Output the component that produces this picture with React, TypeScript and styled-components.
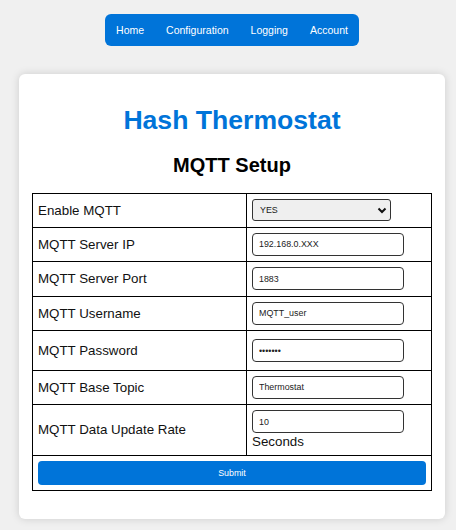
import React, { useState } from 'react'
import styled, { createGlobalStyle } from 'styled-components'

const GlobalStyle = createGlobalStyle`
  body {
    margin: 0;
    background: #f0f0f0;
    font-family: "Liberation Sans", Arial, sans-serif;
    color: #111;
  }
`

const BLUE = '#0074d9'

interface Field {
  label: string
  type: 'select' | 'text' | 'password' | 'number'
  value: string
  unit?: string
  tall?: boolean
}

const fields: Field[] = [
  { label: 'Enable MQTT', type: 'select', value: 'YES' },
  { label: 'MQTT Server IP', type: 'text', value: '192.168.0.XXX' },
  { label: 'MQTT Server Port', type: 'text', value: '1883' },
  { label: 'MQTT Username', type: 'text', value: 'MQTT_user' },
  { label: 'MQTT Password', type: 'password', value: 'passwrd', tall: true },
  { label: 'MQTT Base Topic', type: 'text', value: 'Thermostat' },
  { label: 'MQTT Data Update Rate', type: 'text', value: '10', unit: 'Seconds' },
]

const App = () => {
  const [values, setValues] = useState(fields.map((f) => f.value))

  const update = (i: number, v: string) => {
    const next = [...values]
    next[i] = v
    setValues(next)
  }

  return (
    <Page>
      <GlobalStyle />
      <Nav>
        <NavLink href="#">Home</NavLink>
        <NavLink href="#">Configuration</NavLink>
        <NavLink href="#">Logging</NavLink>
        <NavLink href="#">Account</NavLink>
      </Nav>
      <Card>
        <Title>Hash Thermostat</Title>
        <Subtitle>MQTT Setup</Subtitle>
        <form onSubmit={(e) => e.preventDefault()}>
          <Table>
            <colgroup>
              <col style={{ width: 214 }} />
              <col />
            </colgroup>
            <tbody>
              {fields.map((f, i) => (
                <tr key={f.label}>
                  <Cell tall={f.tall}>{f.label}</Cell>
                  <Cell tall={f.tall}>
                    {f.type === 'select' ? (
                      <SelectWrap>
                        <Select value={values[i]} onChange={(e) => update(i, e.target.value)}>
                          <option>YES</option>
                          <option>NO</option>
                        </Select>
                        <Chevron width="10" height="7" viewBox="0 0 10 7">
                          <path d="M1.5 1.5 L5 5 L8.5 1.5" fill="none" stroke="#111" strokeWidth="2" />
                        </Chevron>
                      </SelectWrap>
                    ) : (
                      <Input
                        type={f.type}
                        value={values[i]}
                        onChange={(e) => update(i, e.target.value)}
                      />
                    )}
                    {f.unit && <Unit>{f.unit}</Unit>}
                  </Cell>
                </tr>
              ))}
              <tr>
                <Cell colSpan={2}>
                  <SubmitButton type="submit">Submit</SubmitButton>
                </Cell>
              </tr>
            </tbody>
          </Table>
        </form>
      </Card>
    </Page>
  )
}

export default App

const Page = styled.div`
  display: flex;
  flex-direction: column;
  align-items: center;
  padding: 14px 0 12px 8px;
`

const Nav = styled.nav`
  display: flex;
  background: ${BLUE};
  border-radius: 6px;
`

const NavLink = styled.a`
  color: #fff;
  text-decoration: none;
  font-size: 10.5px;
  line-height: 12px;
  padding: 10px 11px;
`

const Card = styled.div`
  margin-top: 28px;
  width: 426px;
  box-sizing: border-box;
  padding: 31px 13px 28px;
  background: #fff;
  border-radius: 6px;
  box-shadow: 0 0 8px rgba(0, 0, 0, 0.15);
`

const Title = styled.h1`
  margin: 0 0 18px;
  text-align: center;
  color: ${BLUE};
  font-size: 26.6px;
  font-weight: bold;
`

const Subtitle = styled.h2`
  margin: 0 0 16px;
  text-align: center;
  font-size: 20px;
  font-weight: bold;
  color: #000;
`

const Table = styled.table`
  width: 400px;
  border-collapse: collapse;
  table-layout: fixed;
  border: 1px solid #000;
`

const Cell = styled.td<{ tall?: boolean }>`
  border: 1px solid #000;
  padding: ${(p) => (p.tall ? '8px 5px 7.5px' : '5px 5px 5.5px')};
  font-size: 13.33px;
  vertical-align: middle;
`

const Input = styled.input`
  display: block;
  box-sizing: border-box;
  width: 152px;
  height: 23px;
  padding: 0 6px;
  border: 1px solid #333;
  border-radius: 4px;
  font-family: "Liberation Sans", Arial, sans-serif;
  font-size: 8.9px;
  color: #222;
  background: #fff;
`

const SelectWrap = styled.div`
  position: relative;
  width: 139px;
`

const Select = styled.select`
  display: block;
  appearance: none;
  box-sizing: border-box;
  width: 139px;
  height: 22px;
  padding: 0 7px;
  border: 1px solid #333;
  border-radius: 3px;
  background: #efefef;
  font-family: "Liberation Sans", Arial, sans-serif;
  font-size: 8.9px;
  color: #1a1a1a;
`

const Chevron = styled.svg`
  position: absolute;
  right: 4px;
  top: 8px;
  pointer-events: none;
`

const Unit = styled.div`
  margin-top: 1px;
  line-height: 15px;
`

const SubmitButton = styled.button`
  display: block;
  width: 100%;
  height: 24px;
  border: none;
  border-radius: 4px;
  background: ${BLUE};
  color: #fff;
  font-family: "Liberation Sans", Arial, sans-serif;
  font-size: 8.9px;
  cursor: pointer;
`
